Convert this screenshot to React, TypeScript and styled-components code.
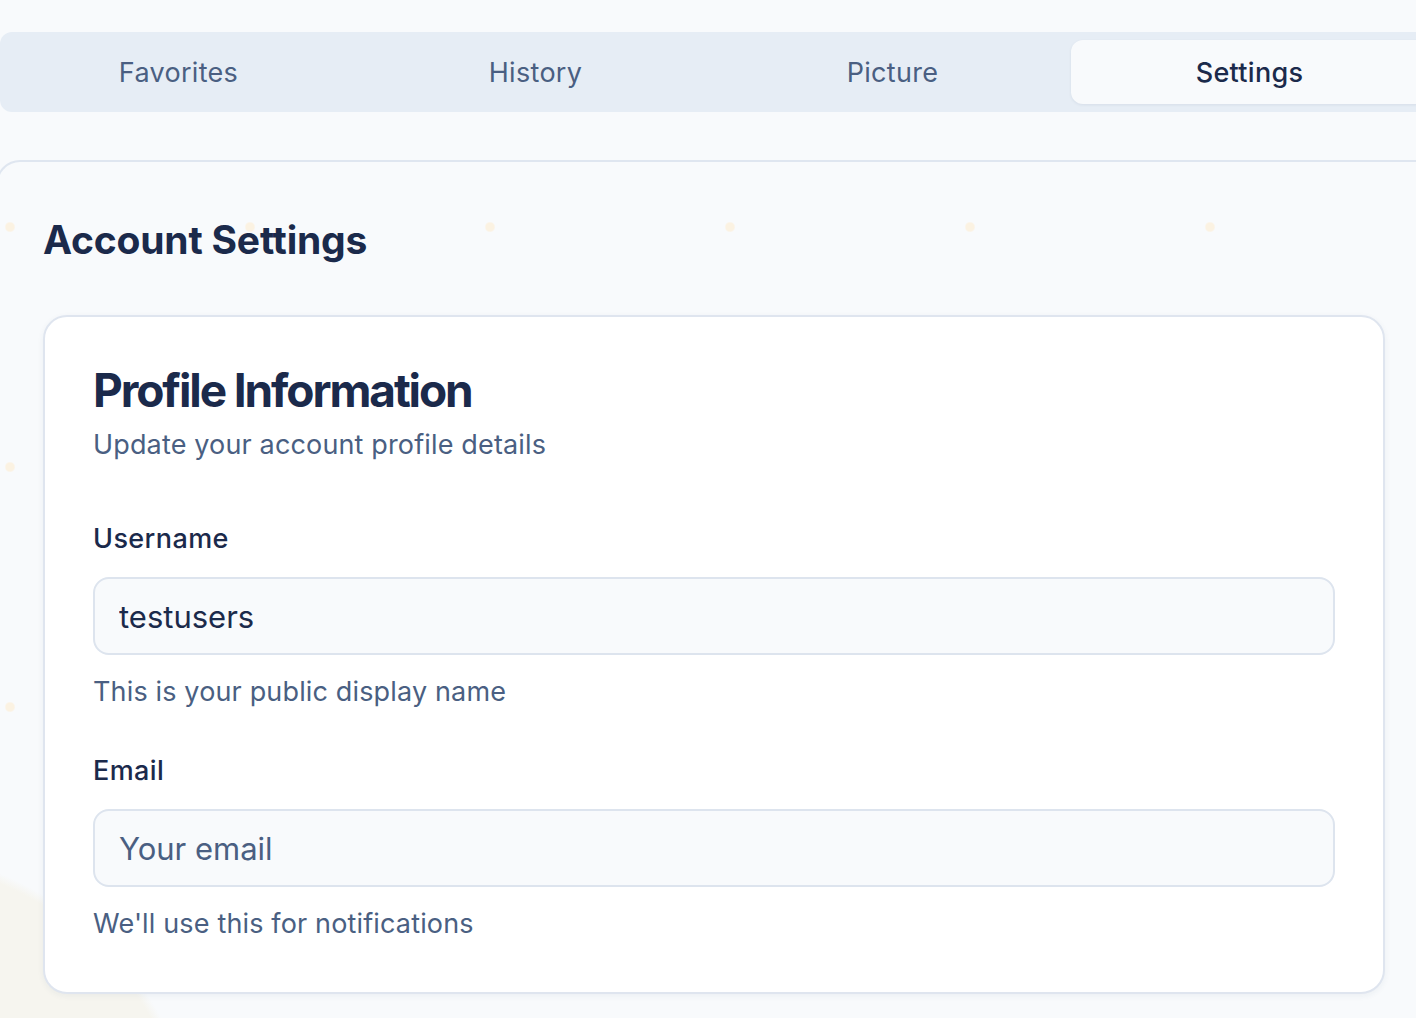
import React from "react";
import styled, { createGlobalStyle } from "styled-components";

const GlobalStyle = createGlobalStyle`
  html, body {
    margin: 0;
    padding: 0;
    background: #f8fafc;
    font-family: Inter, "Noto Sans", "Liberation Sans", sans-serif;
    -webkit-font-smoothing: antialiased;
  }
  * { box-sizing: border-box; }
`;

const Page = styled.div`
  width: 1416px;
  height: 1018px;
  overflow: hidden;
  padding-top: 32px;
`;

const Stage = styled.div`
  width: 1440px;
`;

const TabBar = styled.div`
  display: grid;
  grid-template-columns: repeat(4, 357px);
  padding: 8px 0;
  height: 80px;
  background: #e6edf5;
  border-radius: 12px 0 0 12px;
`;

const Tab = styled.button<{ $active?: boolean }>`
  appearance: none;
  border: none;
  margin: 0;
  height: 64px;
  font-family: inherit;
  font-size: 27px;
  font-weight: ${(p) => (p.$active ? 500 : 400)};
  color: ${(p) => (p.$active ? "#1b2a4b" : "#4a5f82")};
  background: ${(p) => (p.$active ? "#f8fafc" : "transparent")};
  border-radius: 12px;
  box-shadow: ${(p) => (p.$active ? "0 1px 3px rgba(30, 50, 90, 0.08)" : "none")};
  letter-spacing: 0.3px;
  cursor: pointer;
`;

const OuterCard = styled.section`
  margin: 48px 0 0 -4px;
  width: 1436px;
  border: 2px solid #dfe6f0;
  border-right: none;
  border-radius: 24px 0 0 0;
  padding: 54px 0 60px 45px;
  min-height: 900px;
  background-color: #f8fafc;
  background-image:
    radial-gradient(circle 320px at -118px 1008px, #f6f5ef 97%, rgba(248, 250, 252, 0) 100%),
    radial-gradient(circle, #fbf2e2 4px, rgba(251, 242, 226, 0) 5.5px);
  background-size: 100% 100%, 240px 240px;
  background-repeat: no-repeat, repeat;
  background-position: 0 0, 132px 185px;
`;

const PageTitle = styled.h1`
  margin: 0;
  font-size: 39px;
  line-height: 48px;
  font-weight: 700;
  color: #1b2a4b;
  letter-spacing: -0.2px;
`;

const Card = styled.div`
  margin-top: 51px;
  width: 1342px;
  background: #ffffff;
  border: 2px solid #dfe5ef;
  border-radius: 24px;
  box-shadow: 0 2px 6px rgba(40, 60, 110, 0.06);
  padding: 44px 48px 50px 48px;
`;

const CardTitle = styled.h2`
  margin: 0;
  font-size: 46px;
  line-height: 58px;
  font-weight: 700;
  letter-spacing: -2.1px;
  color: #1b2a4b;
`;

const CardSubtitle = styled.p`
  margin: 8px 0 0;
  font-size: 27px;
  line-height: 36px;
  letter-spacing: 0.15px;
  color: #4a5f82;
`;

const Field = styled.div<{ $first?: boolean }>`
  display: flex;
  flex-direction: column;
  margin-top: ${(p) => (p.$first ? "58px" : "43px")};
`;

const Label = styled.label`
  font-size: 27px;
  line-height: 36px;
  font-weight: 500;
  letter-spacing: 0.4px;
  color: #1b2a4b;
`;

const Input = styled.input`
  margin-top: 20px;
  width: 100%;
  height: 78px;
  border: 2px solid #dde4ee;
  border-radius: 16px;
  background: #f8fafc;
  padding: 0 24px;
  font-family: inherit;
  font-size: 31px;
  color: #1b2a4b;
  outline: none;
  &::placeholder {
    color: #4a5f82;
    opacity: 1;
  }
`;

const Hint = styled.p`
  margin: 19px 0 0;
  font-size: 27px;
  line-height: 36px;
  letter-spacing: 0.15px;
  color: #4a5f82;
`;

const tabs = ["Favorites", "History", "Picture", "Settings"];

export default function App() {
  return (
    <>
      <GlobalStyle />
      <Page>
        <Stage>
          <TabBar>
            {tabs.map((t) => (
              <Tab key={t} $active={t === "Settings"}>
                {t}
              </Tab>
            ))}
          </TabBar>
          <OuterCard>
            <PageTitle>Account Settings</PageTitle>
            <Card>
              <CardTitle>Profile Information</CardTitle>
              <CardSubtitle>Update your account profile details</CardSubtitle>
              <Field $first>
                <Label htmlFor="username">Username</Label>
                <Input id="username" defaultValue="testusers" />
                <Hint>This is your public display name</Hint>
              </Field>
              <Field>
                <Label htmlFor="email">Email</Label>
                <Input id="email" placeholder="Your email" />
                <Hint>We'll use this for notifications</Hint>
              </Field>
            </Card>
          </OuterCard>
        </Stage>
      </Page>
    </>
  );
}
